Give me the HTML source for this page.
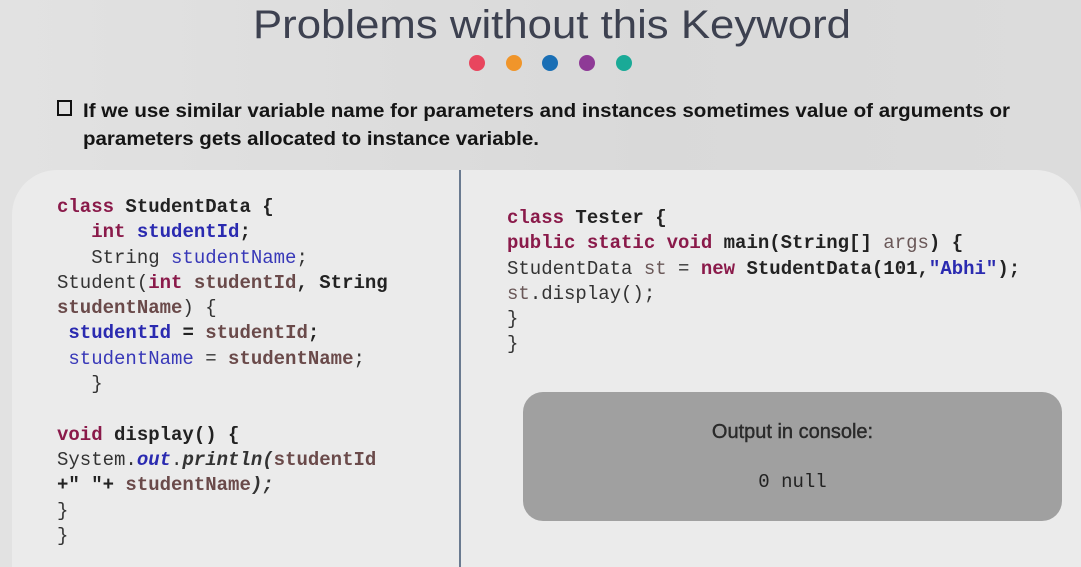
<!DOCTYPE html>
<html><head><meta charset="utf-8"><style>
html,body{margin:0;padding:0;width:1081px;height:567px;overflow:hidden}
body{position:relative;background:linear-gradient(90deg,#e2e2e2,#d9d9d9 60%,#dcdcdc);font-family:"Liberation Sans",sans-serif}
.panel{position:absolute;left:12px;top:170px;width:1069px;height:420px;background:#ebebeb;border-radius:45px 45px 0 0}
.vl{position:absolute;left:459px;top:170px;width:2px;height:397px;background:#6a7a90}
pre{position:absolute;margin:0;font-family:"Liberation Mono",monospace;font-size:19px;line-height:25.3px;color:#333;font-weight:normal}
.k{color:#8a1a4a;font-weight:bold}
.b{font-weight:bold;color:#222}
.v{color:#2a2ab0;font-weight:bold}
.vn{color:#3838b8}
.p{color:#6a4a4a;font-weight:bold}
.g{color:#6a5858}
.i{font-style:italic;font-weight:bold;color:#2a2ab0}
.out{position:absolute;left:523px;top:392px;width:539px;height:129px;background:#a0a0a0;border-radius:20px}
.dot{position:absolute;top:55px;width:16px;height:16px;border-radius:50%}
</style></head><body>
<svg width="1081" height="160" style="position:absolute;left:0;top:0">
<text x="253" y="38" textLength="598" lengthAdjust="spacingAndGlyphs" font-family="Liberation Sans" font-size="40" fill="#3d4150">Problems without this Keyword</text>
<rect x="58" y="101" width="13" height="14" fill="none" stroke="#111" stroke-width="2"/>
<text x="83" y="117" textLength="927" lengthAdjust="spacingAndGlyphs" font-family="Liberation Sans" font-weight="bold" font-size="19" fill="#151515">If we use similar variable name for parameters and instances sometimes value of arguments or</text>
<text x="83" y="145" textLength="456" lengthAdjust="spacingAndGlyphs" font-family="Liberation Sans" font-weight="bold" font-size="19" fill="#151515">parameters gets allocated to instance variable.</text>
</svg>
<div class="dot" style="left:469px;background:#e8465e"></div>
<div class="dot" style="left:506px;background:#f0952a"></div>
<div class="dot" style="left:542px;background:#1a6fb5"></div>
<div class="dot" style="left:579px;background:#8e3a96"></div>
<div class="dot" style="left:616px;background:#1aaa97"></div>
<div class="panel"></div>
<div class="vl"></div>
<pre style="left:57px;top:195px"><span class="k">class</span> <span class="b">StudentData {</span>
   <span class="k">int</span> <span class="v">studentId</span><span class="b">;</span>
   String <span class="vn">studentName</span>;
Student(<span class="k">int</span> <span class="p">studentId</span><span class="b">, String</span>
<span class="p">studentName</span>) {
 <span class="v">studentId</span> <span class="b">=</span> <span class="p">studentId</span><span class="b">;</span>
 <span class="vn">studentName</span> = <span class="p">studentName</span>;
   }

<span class="k">void</span> <span class="b">display() {</span>
System.<span class="i">out</span>.<span class="i" style="color:#333">println(</span><span class="p">studentId</span>
<span class="b">+" "+</span> <span class="p">studentName</span><span class="i" style="color:#333">);</span>
}
}</pre>
<pre style="left:507px;top:206px"><span class="k">class</span> <span class="b">Tester {</span>
<span class="k">public static void</span> <span class="b">main(String[]</span> <span class="g">args</span><span class="b">) {</span>
StudentData <span class="g">st</span> = <span class="k">new</span> <span class="b">StudentData(101,</span><span class="v">"Abhi"</span><span class="b">);</span>
<span class="g">st</span>.display();
}
}</pre>
<div class="out">
<div style="position:absolute;left:0;right:0;top:29px;text-align:center;font-size:20px;color:#2a2a2a;-webkit-text-stroke:0.4px #2a2a2a">Output in console:</div>
<div style="position:absolute;left:0;right:0;top:79px;text-align:center;font-family:'Liberation Mono',monospace;font-size:19px;color:#222">0 null</div>
</div>
</body></html>
